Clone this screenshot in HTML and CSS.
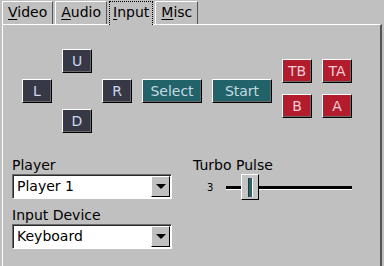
FILE: index.html
```html
<!DOCTYPE html>
<html lang="en">
<head>
    <meta charset="UTF-8">
    <meta name="viewport" content="width=device-width, initial-scale=1.0">
    <title>Input Settings</title>
    <link rel="stylesheet" href="styles.css">
</head>
<body>
    <!-- Tab strip -->
    <nav class="tabs">
        <div class="tab"><u>V</u>ideo</div>
        <div class="tab"><u>A</u>udio</div>
        <div class="tab tab-active"><u>I</u>nput</div>
        <div class="tab"><u>M</u>isc</div>
    </nav>

    <main class="panel">
        <!-- Controller buttons -->
        <section class="pad-row">
            <div class="pad-grid">
                <button class="key key-dark key-up">U</button>
                <button class="key key-dark key-left">L</button>
                <button class="key key-dark key-right">R</button>
                <button class="key key-dark key-down">D</button>
                <button class="key key-teal key-select">Select</button>
                <button class="key key-teal key-start">Start</button>
            </div>
            <div class="face-grid">
                <button class="key key-red">TB</button>
                <button class="key key-red">TA</button>
                <button class="key key-red">B</button>
                <button class="key key-red">A</button>
            </div>
        </section>

        <!-- Settings -->
        <section class="settings">
            <div class="col-left">
                <label class="field-label">Player</label>
                <div class="choice">
                    <span class="choice-text">Player 1</span>
                    <span class="choice-arrow"><span class="tri"></span></span>
                </div>
                <label class="field-label">Input Device</label>
                <div class="choice">
                    <span class="choice-text">Keyboard</span>
                    <span class="choice-arrow"><span class="tri"></span></span>
                </div>
            </div>
            <div class="col-right">
                <label class="field-label">Turbo Pulse</label>
                <div class="slider-row">
                    <span class="slider-value">3</span>
                    <div class="slider">
                        <span class="track track-left"></span>
                        <span class="thumb"><span class="thumb-grip"></span></span>
                        <span class="track track-right"></span>
                    </div>
                </div>
            </div>
        </section>
    </main>
</body>
</html>
```

FILE: styles.css
```css
/* General */
body {
    margin: 0;
    background-color: #c0c0c0;
    font-family: "DejaVu Sans", sans-serif;
    font-size: 14px;
    color: #000;
    overflow: hidden;
}

/* Tabs */
.tabs {
    display: flex;
    gap: 2px;
    padding: 1px 0 0 2px;
    height: 23px;
    align-items: flex-end;
}
.tab {
    box-sizing: border-box;
    height: 23px;
    padding: 2px 5px 0 5px;
    line-height: 17px;
    border-top: 1px solid #fff;
    border-left: 1px solid #fff;
    border-right: 1px solid #555;
}
.tab u {
    text-decoration-thickness: 1px;
    text-underline-offset: 2px;
}
.tab-active {
    height: 24px;
    padding: 2px 3px 0 3px;
    border: 1px dotted #000;
    border-bottom: none;
    margin-bottom: -1px;
    position: relative;
    z-index: 1;
    background: #c0c0c0;
}

/* Panel */
.panel {
    margin-left: 2px;
    width: 380px;
    height: 242px;
    box-sizing: border-box;
    border-top: 1px solid #fff;
    border-left: 1px solid #fff;
    border-right: 2px solid #555;
    padding: 24px 0 0 19px;
}

/* Buttons */
.pad-row {
    display: flex;
    align-items: flex-start;
    gap: 10px;
}
.pad-grid {
    display: grid;
    grid-template-columns: 30px 30px 30px 60px 60px;
    grid-template-rows: 24px 24px 24px;
    column-gap: 10px;
    row-gap: 6px;
}
.face-grid {
    display: grid;
    grid-template-columns: 30px 30px;
    grid-template-rows: 24px 24px;
    column-gap: 10px;
    row-gap: 11px;
    margin-top: 10px;
}
.key {
    box-sizing: border-box;
    margin: 0;
    padding: 0;
    font-family: inherit;
    font-size: 14px;
    line-height: 20px;
    border: 1px solid;
    border-color: #fff #000 #000 #fff;
    box-shadow: inset -1px -1px 0 #6a6a6a;
}
.key-dark {
    background: #373846;
    color: #ccd6ec;
}
.key-teal {
    background: #22636a;
    color: #c4dae0;
}
.key-red {
    background: #b21c2c;
    color: #f2ccd4;
}
.key-up { grid-column: 2; grid-row: 1; }
.key-left { grid-column: 1; grid-row: 2; }
.key-right { grid-column: 3; grid-row: 2; }
.key-down { grid-column: 2; grid-row: 3; }
.key-select { grid-column: 4; grid-row: 2; }
.key-start { grid-column: 5; grid-row: 2; }

/* Settings */
.settings {
    display: flex;
    gap: 21px;
    margin: 24px 0 0 -10px;
}
.col-left {
    width: 160px;
    display: flex;
    flex-direction: column;
}
.field-label {
    line-height: 16px;
    height: 16px;
    margin-bottom: 1px;
}
.choice {
    box-sizing: border-box;
    height: 25px;
    display: flex;
    align-items: center;
    background: #fff;
    border: 1px solid;
    border-color: #6a6a6a #fff #fff #6a6a6a;
    box-shadow: inset 1px 1px 0 #2a2a2a;
    margin-bottom: 8px;
}
.choice-text {
    flex: 1;
    padding-left: 4px;
    line-height: 17px;
}
.choice-arrow {
    box-sizing: border-box;
    width: 19px;
    height: 21px;
    margin-right: 1px;
    background: #c0c0c0;
    border: 1px solid;
    border-color: #fff #000 #000 #fff;
    display: flex;
    align-items: center;
    justify-content: center;
}
.tri {
    width: 0;
    height: 0;
    border-left: 5px solid transparent;
    border-right: 5px solid transparent;
    border-top: 5px solid #000;
}

/* Slider */
.col-right {
    display: flex;
    flex-direction: column;
}
.slider-row {
    display: flex;
    align-items: center;
    height: 26px;
}
.slider-value {
    width: 33px;
    padding-left: 14px;
    box-sizing: border-box;
    font-size: 10px;
}
.slider {
    display: flex;
    align-items: center;
    width: 126px;
}
.track {
    height: 3px;
    background: #000;
    box-shadow: 0 1px 0 #fff;
}
.track-left { width: 15px; }
.track-right { flex: 1; }
.thumb {
    box-sizing: border-box;
    width: 18px;
    height: 26px;
    background: #c4c4c4;
    border: 1px solid;
    border-color: #fff #000 #000 #fff;
    display: flex;
    justify-content: center;
    align-items: center;
}
.thumb-grip {
    box-sizing: border-box;
    width: 5px;
    height: 19px;
    background: #2a6468;
    border-left: 1px solid #333;
    border-right: 1px solid #fff;
}
```
